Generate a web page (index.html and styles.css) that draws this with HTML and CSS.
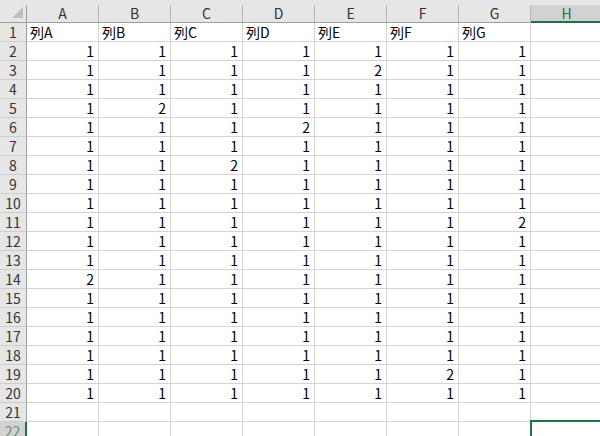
FILE: index.html
```html
<!DOCTYPE html>
<html lang="ja">
<head>
    <meta charset="UTF-8">
    <title>Sheet1</title>
    <link rel="stylesheet" href="styles.css">
</head>
<body>
    <table class="sheet">
        <colgroup>
            <col class="col-rh">
            <col class="col"><col class="col"><col class="col"><col class="col">
            <col class="col"><col class="col"><col class="col"><col class="col">
        </colgroup>
        <thead>
            <tr>
                <th class="corner"><div class="head-cell"><svg width="12" height="12" viewBox="0 0 12 12"><polygon points="11,0 11,11 0,11" fill="#bdbdbd"/></svg></div></th>
                <th><div class="head-cell">A</div></th>
                <th><div class="head-cell">B</div></th>
                <th><div class="head-cell">C</div></th>
                <th><div class="head-cell">D</div></th>
                <th><div class="head-cell">E</div></th>
                <th><div class="head-cell">F</div></th>
                <th><div class="head-cell">G</div></th>
                <th class="active"><div class="head-cell">H</div></th>
            </tr>
        </thead>
        <tbody>
            <tr><th>1</th><td>列A</td><td>列B</td><td>列C</td><td>列D</td><td>列E</td><td>列F</td><td>列G</td><td></td></tr>
            <tr><th>2</th><td class="n">1</td><td class="n">1</td><td class="n">1</td><td class="n">1</td><td class="n">1</td><td class="n">1</td><td class="n">1</td><td></td></tr>
            <tr><th>3</th><td class="n">1</td><td class="n">1</td><td class="n">1</td><td class="n">1</td><td class="n">2</td><td class="n">1</td><td class="n">1</td><td></td></tr>
            <tr><th>4</th><td class="n">1</td><td class="n">1</td><td class="n">1</td><td class="n">1</td><td class="n">1</td><td class="n">1</td><td class="n">1</td><td></td></tr>
            <tr><th>5</th><td class="n">1</td><td class="n">2</td><td class="n">1</td><td class="n">1</td><td class="n">1</td><td class="n">1</td><td class="n">1</td><td></td></tr>
            <tr><th>6</th><td class="n">1</td><td class="n">1</td><td class="n">1</td><td class="n">2</td><td class="n">1</td><td class="n">1</td><td class="n">1</td><td></td></tr>
            <tr><th>7</th><td class="n">1</td><td class="n">1</td><td class="n">1</td><td class="n">1</td><td class="n">1</td><td class="n">1</td><td class="n">1</td><td></td></tr>
            <tr><th>8</th><td class="n">1</td><td class="n">1</td><td class="n">2</td><td class="n">1</td><td class="n">1</td><td class="n">1</td><td class="n">1</td><td></td></tr>
            <tr><th>9</th><td class="n">1</td><td class="n">1</td><td class="n">1</td><td class="n">1</td><td class="n">1</td><td class="n">1</td><td class="n">1</td><td></td></tr>
            <tr><th>10</th><td class="n">1</td><td class="n">1</td><td class="n">1</td><td class="n">1</td><td class="n">1</td><td class="n">1</td><td class="n">1</td><td></td></tr>
            <tr><th>11</th><td class="n">1</td><td class="n">1</td><td class="n">1</td><td class="n">1</td><td class="n">1</td><td class="n">1</td><td class="n">2</td><td></td></tr>
            <tr><th>12</th><td class="n">1</td><td class="n">1</td><td class="n">1</td><td class="n">1</td><td class="n">1</td><td class="n">1</td><td class="n">1</td><td></td></tr>
            <tr><th>13</th><td class="n">1</td><td class="n">1</td><td class="n">1</td><td class="n">1</td><td class="n">1</td><td class="n">1</td><td class="n">1</td><td></td></tr>
            <tr><th>14</th><td class="n">2</td><td class="n">1</td><td class="n">1</td><td class="n">1</td><td class="n">1</td><td class="n">1</td><td class="n">1</td><td></td></tr>
            <tr><th>15</th><td class="n">1</td><td class="n">1</td><td class="n">1</td><td class="n">1</td><td class="n">1</td><td class="n">1</td><td class="n">1</td><td></td></tr>
            <tr><th>16</th><td class="n">1</td><td class="n">1</td><td class="n">1</td><td class="n">1</td><td class="n">1</td><td class="n">1</td><td class="n">1</td><td></td></tr>
            <tr><th>17</th><td class="n">1</td><td class="n">1</td><td class="n">1</td><td class="n">1</td><td class="n">1</td><td class="n">1</td><td class="n">1</td><td></td></tr>
            <tr><th>18</th><td class="n">1</td><td class="n">1</td><td class="n">1</td><td class="n">1</td><td class="n">1</td><td class="n">1</td><td class="n">1</td><td></td></tr>
            <tr><th>19</th><td class="n">1</td><td class="n">1</td><td class="n">1</td><td class="n">1</td><td class="n">1</td><td class="n">2</td><td class="n">1</td><td></td></tr>
            <tr><th>20</th><td class="n">1</td><td class="n">1</td><td class="n">1</td><td class="n">1</td><td class="n">1</td><td class="n">1</td><td class="n">1</td><td></td></tr>
            <tr><th>21</th><td></td><td></td><td></td><td></td><td></td><td></td><td></td><td></td></tr>
            <tr><th class="active">22</th><td></td><td></td><td></td><td></td><td></td><td></td><td></td><td class="selected"></td></tr>
        </tbody>
    </table>
</body>
</html>
```

FILE: styles.css
```css
body {
    margin: 0;
    background: #ffffff;
    overflow: hidden;
    font-family: "Noto Sans CJK JP", "Noto Sans", sans-serif;
    font-size: 14px;
    color: #000;
}

.sheet {
    border-collapse: separate;
    border-spacing: 0;
    table-layout: fixed;
    width: 603px;
}

.col-rh {
    width: 27px;
}

.col {
    width: 72px;
}

/* column headers */
thead th {
    height: 22px;
    padding: 0;
    background: #e6e6e6;
    border-bottom: 1px solid #9e9e9e;
    vertical-align: bottom;
    font-weight: normal;
    color: #333;
}

.head-cell {
    height: 17px;
    line-height: 17px;
    border-right: 1px solid #b4b4b4;
    text-align: center;
}

thead th.active {
    position: relative;
    color: #217346;
}

thead th.active .head-cell {
    background: #d2d2d2;
}

thead th.active::after {
    content: "";
    position: absolute;
    left: 0;
    right: 0;
    bottom: -1px;
    height: 2px;
    background: #217346;
}

.corner .head-cell {
    display: flex;
    justify-content: flex-end;
    align-items: flex-end;
    height: 17px;
    padding: 0 2px 3px 0;
    box-sizing: border-box;
    border-right-color: #9e9e9e;
}

/* row headers */
tbody th {
    height: 18px;
    padding: 0;
    background: #e6e6e6;
    border-right: 1px solid #9e9e9e;
    border-bottom: 1px solid #cdcdcd;
    font-weight: normal;
    text-align: center;
    line-height: 18px;
    color: #333;
}

tbody th.active {
    background: #d2d2d2;
    color: #6b8f79;
    border-right: 2px solid #217346;
}

/* cells */
td {
    height: 18px;
    padding: 0 4px 0 3px;
    border-right: 1px solid #d4d4d4;
    border-bottom: 1px solid #d4d4d4;
    line-height: 18px;
    white-space: nowrap;
    overflow: hidden;
}

td.n {
    text-align: right;
}

td.selected {
    position: relative;
    overflow: visible;
}

td.selected::after {
    content: "";
    position: absolute;
    top: -2px;
    left: -1px;
    width: 80px;
    height: 30px;
    border: 2px solid #217346;
}
```
